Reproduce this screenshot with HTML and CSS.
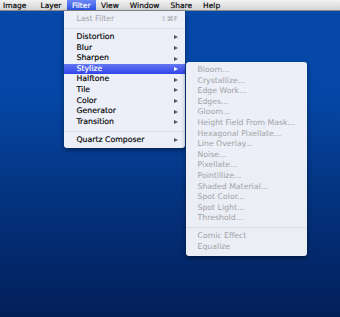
FILE: index.html
```html
<!DOCTYPE html>
<html lang="en">
<head>
    <meta charset="UTF-8">
    <title>Filter menu</title>
    <link rel="stylesheet" href="styles.css">
</head>
<body>

<div class="menubar">
    <span class="bar-item">Image</span>
    <span class="bar-item">Layer</span>
    <span class="bar-item active">Filter</span>
    <span class="bar-item">View</span>
    <span class="bar-item">Window</span>
    <span class="bar-item">Share</span>
    <span class="bar-item">Help</span>
</div>

<div class="menu main-menu">
    <div class="item disabled"><span>Last Filter</span><span class="shortcut">⇧⌘F</span></div>
    <div class="sep"></div>
    <div class="item"><span>Distortion</span><span class="arrow"></span></div>
    <div class="item"><span>Blur</span><span class="arrow"></span></div>
    <div class="item"><span>Sharpen</span><span class="arrow"></span></div>
    <div class="item selected"><span>Stylize</span><span class="arrow"></span></div>
    <div class="item"><span>Halftone</span><span class="arrow"></span></div>
    <div class="item"><span>Tile</span><span class="arrow"></span></div>
    <div class="item"><span>Color</span><span class="arrow"></span></div>
    <div class="item"><span>Generator</span><span class="arrow"></span></div>
    <div class="item"><span>Transition</span><span class="arrow"></span></div>
    <div class="sep"></div>
    <div class="item"><span>Quartz Composer</span><span class="arrow"></span></div>
</div>

<div class="menu sub-menu">
    <div class="item disabled">Bloom...</div>
    <div class="item disabled">Crystallize...</div>
    <div class="item disabled">Edge Work...</div>
    <div class="item disabled">Edges...</div>
    <div class="item disabled">Gloom...</div>
    <div class="item disabled">Height Field From Mask...</div>
    <div class="item disabled">Hexagonal Pixellate...</div>
    <div class="item disabled">Line Overlay...</div>
    <div class="item disabled">Noise...</div>
    <div class="item disabled">Pixellate...</div>
    <div class="item disabled">Pointillize...</div>
    <div class="item disabled">Shaded Material...</div>
    <div class="item disabled">Spot Color...</div>
    <div class="item disabled">Spot Light...</div>
    <div class="item disabled">Threshold...</div>
    <div class="sep"></div>
    <div class="item disabled">Comic Effect</div>
    <div class="item disabled">Equalize</div>
</div>

</body>
</html>
```

FILE: styles.css
```css
body {
    margin: 0;
    padding: 0;
    width: 340px;
    height: 317px;
    overflow: hidden;
    position: relative;
    font-family: 'DejaVu Sans', Verdana, sans-serif;
    background: linear-gradient(#0649a9 0%, #0547a6 30%, #04337f 62%, #031f59 100%);
}

.menubar {
    height: 11px;
    display: flex;
    align-items: stretch;
    background: linear-gradient(#f2f2f2, #d4d4d4);
    border-bottom: 1px solid #8a8a8a;
    box-sizing: border-box;
    font-size: 7.5px;
    color: #000;
    -webkit-text-stroke: 0.15px #000;
}

.bar-item {
    display: flex;
    align-items: center;
    padding: 0 5.5px;
    line-height: 11px;
}

.bar-item:first-child {
    padding-left: 3px;
    margin-right: 3px;
}

.bar-item.active {
    padding: 0 5px;
    color: #fff;
    -webkit-text-stroke: 0.15px #fff;
    background: linear-gradient(#6a86f4, #2f52e4);
}

.menu {
    position: absolute;
    background: rgba(244, 245, 250, 0.97);
    box-shadow: 0 2px 5px rgba(0, 0, 0, 0.45);
    border-radius: 0 0 3px 3px;
    font-size: 7.75px;
    color: #000;
    box-sizing: border-box;
}

.main-menu {
    left: 64px;
    top: 11px;
    width: 121px;
    padding: 3px 0 2.5px;
}

.sub-menu {
    left: 185.5px;
    top: 62px;
    width: 121px;
    padding: 3px 0 3.5px;
    border-radius: 3px;
}

.item {
    height: 10.6px;
    line-height: 10.6px;
    display: flex;
    justify-content: space-between;
    align-items: center;
    padding: 0 7px 0 12.5px;
    white-space: nowrap;
    -webkit-text-stroke: 0.15px #000;
}

.sub-menu .item {
    padding-left: 12px;
}

.item.disabled {
    color: #a2a2a6;
    -webkit-text-stroke: 0;
}

.item.selected {
    color: #fff;
    -webkit-text-stroke: 0.15px #fff;
    background: linear-gradient(#6577f3, #3045e8);
}

.shortcut {
    font-size: 6.8px;
    color: #a2a2a6;
    letter-spacing: 0.3px;
}

.arrow {
    width: 0;
    height: 0;
    border-top: 2.5px solid transparent;
    border-bottom: 2.5px solid transparent;
    border-left: 4.5px solid #555;
}

.selected .arrow {
    border-left-color: #fff;
}

.sep {
    height: 1px;
    margin: 3.2px 0 3.3px;
    background: #dcdde2;
}
```
